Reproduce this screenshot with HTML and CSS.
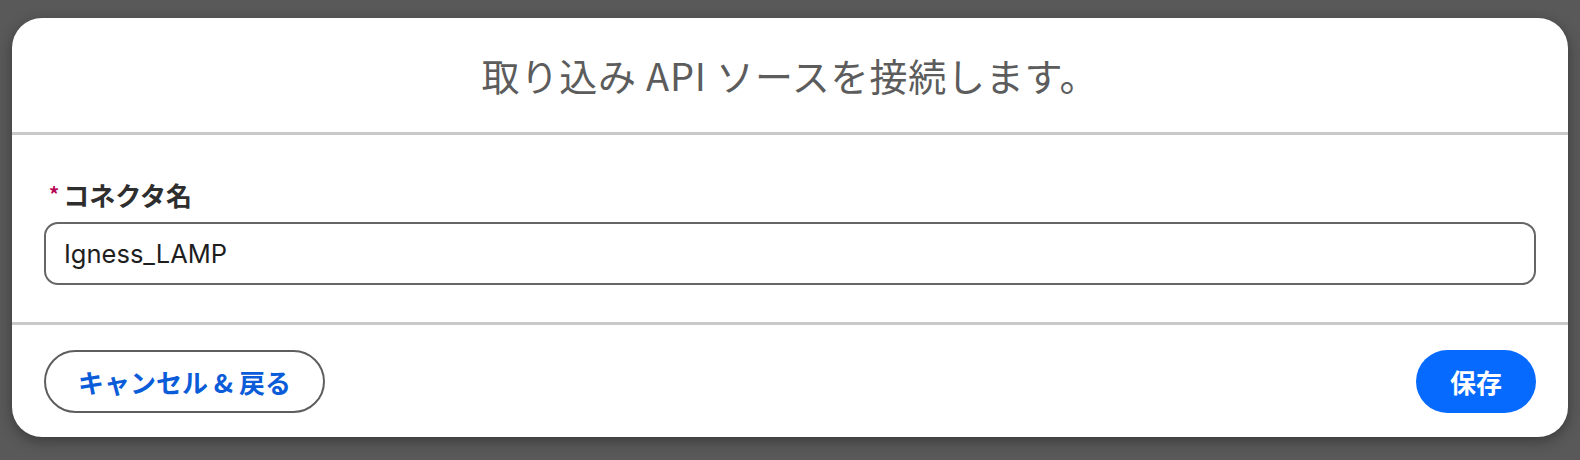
FILE: index.html
```html
<!DOCTYPE html>
<html lang="ja">
<head>
<meta charset="utf-8">
<link rel="stylesheet" href="styles.css">
</head>
<body>
<div class="modal">
  <header class="modal-header">
    <h1 class="title">取り込み API ソースを接続します。</h1>
  </header>
  <section class="modal-body">
    <label class="label"><abbr class="req">*</abbr>コネクタ名</label>
    <div class="input">Igness_LAMP</div>
  </section>
  <footer class="modal-footer">
    <button class="btn btn-neutral">キャンセル &amp; 戻る</button>
    <button class="btn btn-brand">保存</button>
  </footer>
</div>
</body>
</html>
```

FILE: styles.css
```css
html, body {
  margin: 0;
  padding: 0;
}
body {
  background: #595959;
  width: 1580px;
  height: 460px;
  overflow: hidden;
  font-family: "Noto Sans CJK JP", "Noto Sans", sans-serif;
}
.modal {
  margin: 18px 12px 0 12px;
  width: 1556px;
  height: 419px;
  background: #fff;
  border-radius: 30px;
  box-shadow: 0 4px 14px rgba(0, 0, 0, 0.35);
  display: flex;
  flex-direction: column;
  overflow: hidden;
}
.modal-header {
  height: 114px;
  display: flex;
  align-items: center;
  justify-content: center;
  border-bottom: 3px solid #c9c9c9;
  flex: none;
}
.title {
  margin: 0;
  font-size: 38px;
  font-weight: 400;
  letter-spacing: 0.8px;
  color: #5c5c5c;
  line-height: 1;
  padding-top: 0;
}
.modal-body {
  height: 190px;
  box-sizing: border-box;
  padding: 43px 32px 0 32px;
  border-bottom: 3px solid #c9c9c9;
  flex: none;
  display: flex;
  flex-direction: column;
}
.label {
  display: flex;
  align-items: center;
  height: 32px;
  font-size: 26px;
  font-weight: 700;
  color: #2e2e2e;
  margin-bottom: 12px;
}
.req {
  color: #b60554;
  font-size: 20px;
  font-weight: 700;
  text-decoration: none;
  margin: 0 4px 0 5px;
  position: relative;
  top: -1px;
}
.input {
  height: 63px;
  box-sizing: border-box;
  border: 2px solid #666;
  border-radius: 14px;
  display: flex;
  align-items: center;
  padding: 0 18px;
  font-family: Inter, "Noto Sans", sans-serif;
  font-size: 25.5px;
  color: #1e1e1e;
}
.modal-footer {
  flex: 1;
  display: flex;
  justify-content: space-between;
  align-items: flex-start;
  padding: 25px 32px 0 32px;
}
.btn {
  height: 63px;
  border-radius: 32px;
  font-family: "Noto Sans CJK JP", "Noto Sans", sans-serif;
  font-size: 26px;
  font-weight: 700;
  cursor: pointer;
  padding: 0;
}
.btn-neutral {
  width: 281px;
  background: #fff;
  border: 2px solid #5e5e5e;
  color: #0b5cd8;
}
.btn-brand {
  width: 120px;
  background: #066afe;
  border: none;
  color: #fff;
}
```
